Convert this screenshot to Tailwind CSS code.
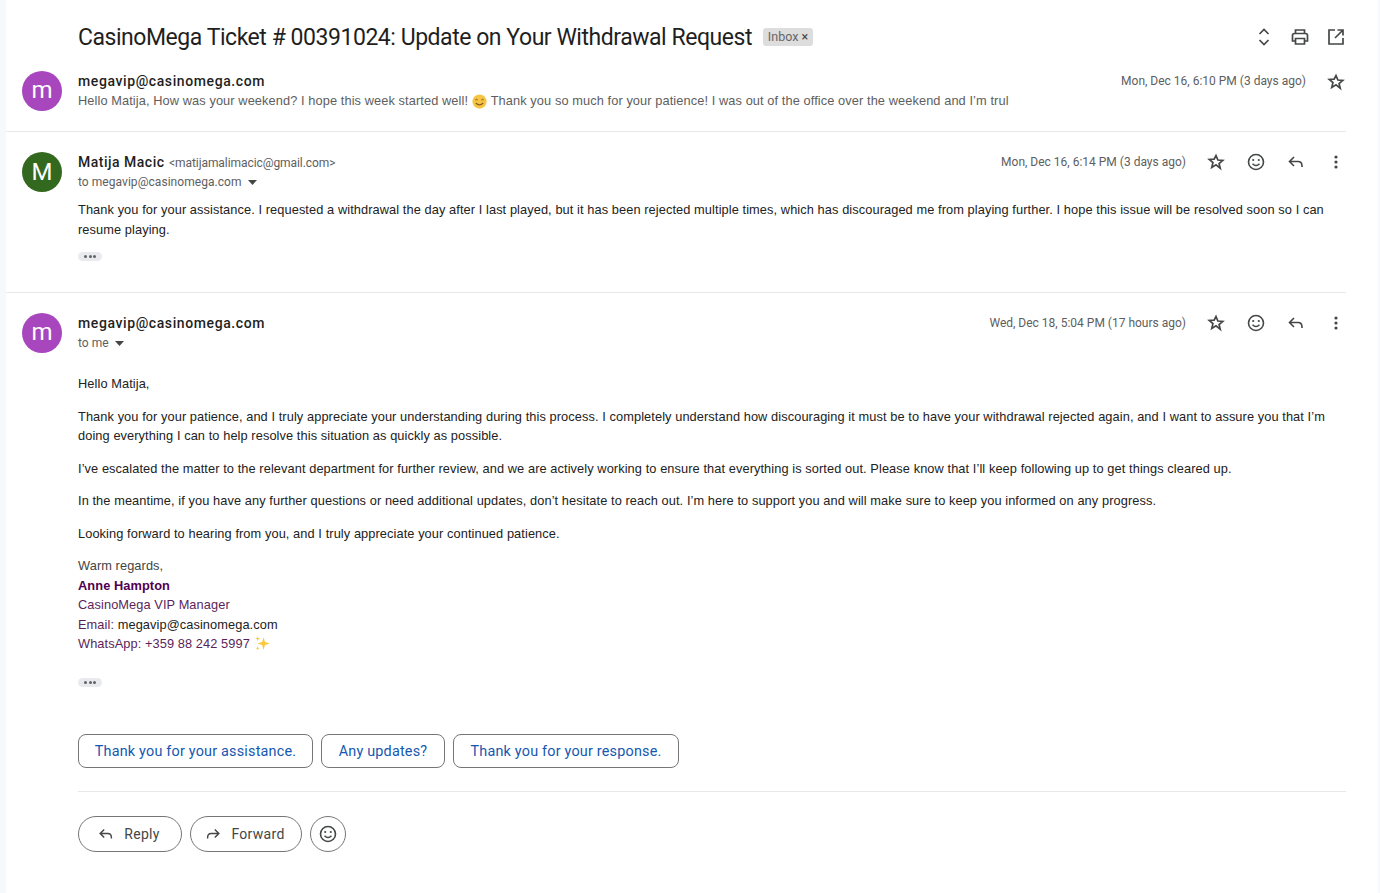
<!DOCTYPE html>
<html lang="en">
<head>
  <meta charset="UTF-8" />
  <title>CasinoMega Ticket # 00391024</title>
  <script src="https://cdn.jsdelivr.net/npm/@tailwindcss/browser@4"></script>
</head>
<body class="bg-white h-[893px] overflow-hidden font-['Liberation_Sans',sans-serif]">
<div class="flex h-[893px]">
  <div class="w-[6px] bg-[#f6f8fc] shrink-0"></div>
  <main class="w-[1340px] shrink-0">

    <!-- subject -->
    <div class="h-[61px] pl-[72px] pt-[24px] flex items-start justify-between">
      <div class="flex items-center h-[28px]">
        <h1 class="font-['Roboto',sans-serif] text-[23px] leading-[28px] tracking-[-0.46px] text-[#1f1f1f]">CasinoMega Ticket # 00391024: Update on Your Withdrawal Request</h1>
        <span class="ml-[11px] mb-[2px] h-[18px] w-[50px] text-center rounded-[3px] bg-[#dddddd] text-[#666666] text-[12.5px] leading-[18px] font-['Roboto',sans-serif]">Inbox <span class="text-[#444444]">×</span></span>
      </div>
      <div class="flex items-center h-[26px] gap-[16px] text-[#444746]">
        <svg class="w-[20px] h-[20px]" viewBox="0 0 20 20" fill="none" stroke="currentColor" stroke-width="1.7"><path d="M5.500 7 10 2.500 14.500 7M5.500 13l4.500 4.500 4.500-4.500"/></svg>
        <svg class="w-[20px] h-[20px]" viewBox="0 0 20 20" fill="none" stroke="currentColor" stroke-width="1.7"><path d="M5.500 6.500V3h9v3.500M5.500 14H2.500V8.500q0-2 2-2h11q2 0 2 2V14h-3"/><path d="M5.500 11.500h9V17h-9z"/></svg>
        <svg class="w-[20px] h-[20px]" viewBox="0 0 20 20" fill="none" stroke="currentColor" stroke-width="1.7"><path d="M9 3H3v14h14v-6M11.500 3H17v5.500M17 3l-8 8"/></svg>
      </div>
    </div>

    <!-- collapsed message -->
    <section class="h-[71px] border-b border-[#e8e8e8] flex">
      <div class="w-[72px] pl-[16px] pt-[10px] shrink-0">
        <div class="w-[40px] h-[40px] rounded-full bg-[#a846bd] text-white text-[24px] leading-[38px] text-center font-['Roboto',sans-serif]">m</div>
      </div>
      <div class="flex-1 pt-[10px]">
        <div class="flex justify-between h-[20px]">
          <span class="text-[14px] leading-[20px] font-medium tracking-[0.6px] text-[#1f1f1f] font-['Roboto',sans-serif]">megavip@casinomega.com</span>
          <div class="flex">
            <span class="text-[12px] leading-[20px] text-[#5e5e5e] font-['Roboto',sans-serif]">Mon, Dec 16, 6:10 PM (3 days ago)</span>
            <svg class="w-[18px] h-[18px] mx-[1px] ml-[21px] mt-[2px]" viewBox="0 0 20 20" fill="none" stroke="#444746" stroke-width="1.900"><path d="M10 2.800l2.100 5 5.400.4-4.100 3.500 1.300 5.300L10 13.200 5.300 16l1.300-5.300-4.100-3.500 5.400-.4z"/></svg>
          </div>
        </div>
        <p class="text-[12.8px] leading-[20px] tracking-[0.09px] text-[#5e5e5e] flex items-center whitespace-pre">Hello Matija, How was your weekend? I hope this week started well! <svg class="w-[15px] h-[15px] mr-[4px]" viewBox="0 0 20 20"><circle cx="10" cy="10" r="9.500" fill="#f7c544"/><path d="M4.500 8q1.500-2 3 0M12.500 8q1.500-2 3 0" fill="none" stroke="#6b4a12" stroke-width="1.300"/><path d="M5 12q5 5 10 0" fill="none" stroke="#8a5a20" stroke-width="1.500"/></svg>Thank you so much for your patience! I was out of the office over the weekend and I’m trul</p>
      </div>
    </section>

    <!-- expanded reply -->
    <section class="h-[161px] border-b border-[#e8e8e8] flex">
      <div class="w-[72px] pl-[16px] pt-[20px] shrink-0">
        <div class="w-[40px] h-[40px] rounded-full bg-[#33691e] text-white text-[24px] leading-[40px] text-center font-['Roboto',sans-serif]">M</div>
      </div>
      <div class="flex-1 pt-[20px]">
        <div class="flex justify-between h-[20px]">
          <div class="leading-[20px]">
            <span class="text-[14px] font-medium tracking-[0.5px] text-[#1f1f1f] font-['Roboto',sans-serif]">Matija Macic</span>
            <span class="text-[12px] tracking-[-0.07px] text-[#5e5e5e] font-['Roboto',sans-serif]">&lt;matijamalimacic@gmail.com&gt;</span>
          </div>
          <div class="flex items-center">
            <span class="text-[12px] leading-[20px] text-[#5e5e5e] font-['Roboto',sans-serif]">Mon, Dec 16, 6:14 PM (3 days ago)</span>
            <div class="flex items-center gap-[20px] ml-[20px]">
              <span class="w-[20px] h-[20px] flex items-center justify-center"><svg class="w-[18px] h-[18px]" viewBox="0 0 20 20" fill="none" stroke="#444746" stroke-width="1.900"><path d="M10 2.800l2.100 5 5.400.4-4.100 3.500 1.300 5.300L10 13.200 5.300 16l1.300-5.300-4.100-3.500 5.400-.4z"/></svg></span>
              <svg class="w-[20px] h-[20px]" viewBox="0 0 20 20" fill="none" stroke="#444746" stroke-width="1.600"><circle cx="10" cy="10" r="7.500"/><circle cx="7.200" cy="8" r="1.100" fill="#444746" stroke="none"/><circle cx="12.800" cy="8" r="1.100" fill="#444746" stroke="none"/><path d="M6.500 11.800q3.500 3.500 7 0"/></svg>
              <svg class="w-[20px] h-[20px]" viewBox="0 0 20 20" fill="none" stroke="#444746" stroke-width="1.600"><path d="M8 5 3.500 9.500 8 14M3.500 9.500H12q4 0 4 4.500v1"/></svg>
              <svg class="w-[20px] h-[20px]" viewBox="0 0 20 20" fill="#444746"><circle cx="10" cy="5" r="1.600"/><circle cx="10" cy="10" r="1.600"/><circle cx="10" cy="15" r="1.600"/></svg>
            </div>
          </div>
        </div>
        <div class="flex items-center h-[20px] text-[12px] tracking-[0.05px] text-[#5e5e5e] font-['Roboto',sans-serif]">to megavip@casinomega.com
          <svg class="w-[9px] h-[5px] ml-[6px]" viewBox="0 0 9 5" fill="#444746"><path d="M0 0h9L4.500 5z"/></svg>
        </div>
        <p class="mt-[8px] text-[12.8px] leading-[19.500px] tracking-[0.085px] text-[#222222] pr-[8px]">Thank you for your assistance. I requested a withdrawal the day after I last played, but it has been rejected multiple times, which has discouraged me from playing further. I hope this issue will be resolved soon so I can resume playing.</p>
        <div class="mt-[13px] w-[24px] h-[9px] rounded-full bg-[#e8eaed] flex items-center justify-center gap-[1.500px]">
          <i class="w-[3px] h-[3px] rounded-full bg-[#5f6368]"></i><i class="w-[3px] h-[3px] rounded-full bg-[#5f6368]"></i><i class="w-[3px] h-[3px] rounded-full bg-[#5f6368]"></i>
        </div>
      </div>
    </section>

    <!-- latest message -->
    <section class="flex">
      <div class="w-[72px] pl-[16px] pt-[20px] shrink-0">
        <div class="w-[40px] h-[40px] rounded-full bg-[#a846bd] text-white text-[24px] leading-[38px] text-center font-['Roboto',sans-serif]">m</div>
      </div>
      <div class="flex-1 pt-[20px]">
        <div class="flex justify-between h-[20px]">
          <span class="text-[14px] leading-[20px] font-medium tracking-[0.6px] text-[#1f1f1f] font-['Roboto',sans-serif]">megavip@casinomega.com</span>
          <div class="flex items-center">
            <span class="text-[12px] leading-[20px] text-[#5e5e5e] font-['Roboto',sans-serif]">Wed, Dec 18, 5:04 PM (17 hours ago)</span>
            <div class="flex items-center gap-[20px] ml-[20px]">
              <span class="w-[20px] h-[20px] flex items-center justify-center"><svg class="w-[18px] h-[18px]" viewBox="0 0 20 20" fill="none" stroke="#444746" stroke-width="1.900"><path d="M10 2.800l2.100 5 5.400.4-4.100 3.500 1.300 5.300L10 13.200 5.300 16l1.300-5.300-4.100-3.500 5.400-.4z"/></svg></span>
              <svg class="w-[20px] h-[20px]" viewBox="0 0 20 20" fill="none" stroke="#444746" stroke-width="1.600"><circle cx="10" cy="10" r="7.500"/><circle cx="7.200" cy="8" r="1.100" fill="#444746" stroke="none"/><circle cx="12.800" cy="8" r="1.100" fill="#444746" stroke="none"/><path d="M6.500 11.800q3.500 3.500 7 0"/></svg>
              <svg class="w-[20px] h-[20px]" viewBox="0 0 20 20" fill="none" stroke="#444746" stroke-width="1.600"><path d="M8 5 3.500 9.500 8 14M3.500 9.500H12q4 0 4 4.500v1"/></svg>
              <svg class="w-[20px] h-[20px]" viewBox="0 0 20 20" fill="#444746"><circle cx="10" cy="5" r="1.600"/><circle cx="10" cy="10" r="1.600"/><circle cx="10" cy="15" r="1.600"/></svg>
            </div>
          </div>
        </div>
        <div class="flex items-center h-[20px] text-[12px] text-[#5e5e5e] font-['Roboto',sans-serif]">to me
          <svg class="w-[9px] h-[5px] ml-[6px]" viewBox="0 0 9 5" fill="#444746"><path d="M0 0h9L4.500 5z"/></svg>
        </div>

        <div class="mt-[21px] text-[12.8px] leading-[19.500px] tracking-[0.085px] text-[#222222] pr-[8px] flex flex-col gap-[13px]">
          <p>Hello Matija,</p>
          <p>Thank you for your patience, and I truly appreciate your understanding during this process. I completely understand how discouraging it must be to have your withdrawal rejected again, and I want to assure you that I’m doing everything I can to help resolve this situation as quickly as possible.</p>
          <p>I’ve escalated the matter to the relevant department for further review, and we are actively working to ensure that everything is sorted out. Please know that I’ll keep following up to get things cleared up.</p>
          <p>In the meantime, if you have any further questions or need additional updates, don’t hesitate to reach out. I’m here to support you and will make sure to keep you informed on any progress.</p>
          <p>Looking forward to hearing from you, and I truly appreciate your continued patience.</p>
          <div>
            <p class="text-[#444444]">Warm regards,</p>
            <p class="font-bold text-[#500050]">Anne Hampton</p>
            <p class="text-[#5b1f5b]">CasinoMega VIP Manager</p>
            <p class="text-[#5b1f5b]">Email: <span class="text-[#222222]">megavip@casinomega.com</span></p>
            <p class="text-[#5b1f5b] flex items-center">WhatsApp: +359 88 242 5997
              <svg class="w-[17px] h-[17px] ml-[4px]" viewBox="0 0 16 16" fill="#f9c83d"><path d="M9 2l1.300 4.700L15 8l-4.700 1.300L9 14 7.700 9.300 3 8l4.700-1.300z"/><path d="M3.500 1l.6 1.900L6 3.500l-1.900.6L3.500 6l-.6-1.900L1 3.500l1.900-.6zM3.500 10.500l.5 1.500 1.500.5-1.500.5-.5 1.500-.5-1.500-1.500-.5 1.500-.5z"/></svg>
            </p>
          </div>
        </div>

        <div class="mt-[24px] w-[24px] h-[9px] rounded-full bg-[#e8eaed] flex items-center justify-center gap-[1.500px]">
          <i class="w-[3px] h-[3px] rounded-full bg-[#5f6368]"></i><i class="w-[3px] h-[3px] rounded-full bg-[#5f6368]"></i><i class="w-[3px] h-[3px] rounded-full bg-[#5f6368]"></i>
        </div>

        <!-- smart replies -->
        <div class="mt-[47px] flex gap-[8px] font-['Roboto',sans-serif] text-[14.4px] tracking-[0.2px] text-[#1558b0]">
          <button class="h-[34px] w-[235px] pt-[2px] border border-[#747775] rounded-[8px]">Thank you for your assistance.</button>
          <button class="h-[34px] w-[124px] pt-[2px] border border-[#747775] rounded-[8px]">Any updates?</button>
          <button class="h-[34px] w-[226px] pt-[2px] border border-[#747775] rounded-[8px]">Thank you for your response.</button>
        </div>

        <div class="mt-[23px] border-t border-[#e8e8e8]"></div>

        <div class="mt-[24px] flex gap-[8px] font-['Roboto',sans-serif] text-[14px] tracking-[0.3px] text-[#444746]">
          <button class="h-[36px] w-[104px] pt-[1px] border border-[#747775] rounded-full flex items-center justify-center gap-[9px] pr-[3px]">
            <svg class="w-[18px] h-[18px]" viewBox="0 0 20 20" fill="none" stroke="#444746" stroke-width="1.600"><path d="M8 5 3.500 9.500 8 14M3.500 9.500H12q4 0 4 4.500v1"/></svg>Reply
          </button>
          <button class="h-[36px] w-[112px] pt-[1px] border border-[#747775] rounded-full flex items-center justify-center gap-[9px] pr-[3px]">
            <svg class="w-[18px] h-[18px]" viewBox="0 0 20 20" fill="none" stroke="#444746" stroke-width="1.600"><path d="M12 5l4.500 4.500L12 14M16.500 9.500H8q-4 0-4 4.500v1"/></svg>Forward
          </button>
          <button class="h-[36px] w-[36px] border border-[#747775] rounded-full flex items-center justify-center">
            <svg class="w-[20px] h-[20px]" viewBox="0 0 20 20" fill="none" stroke="#444746" stroke-width="1.600"><circle cx="10" cy="10" r="7.500"/><circle cx="7.200" cy="8" r="1.100" fill="#444746" stroke="none"/><circle cx="12.800" cy="8" r="1.100" fill="#444746" stroke="none"/><path d="M6.500 11.800q3.500 3.500 7 0"/></svg>
          </button>
        </div>
      </div>
    </section>
  </main>
  <div class="ml-auto w-[2px] bg-[#f6f8fc] shrink-0"></div>
</div>
</body>
</html>
